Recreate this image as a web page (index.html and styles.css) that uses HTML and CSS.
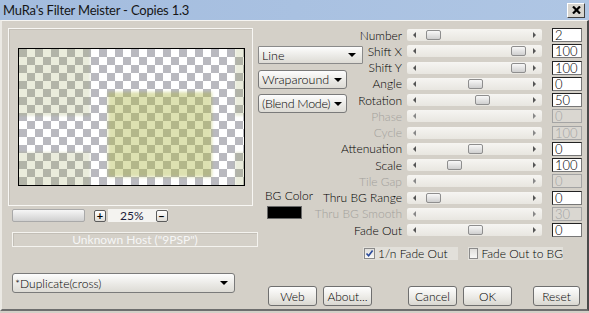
FILE: index.html
```html
<!DOCTYPE html>
<html lang="en">
<head>
  <meta charset="utf-8" />
  <title>MuRa's Filter Meister - Copies 1.3</title>
  <link rel="stylesheet" href="styles.css">
</head>
<body>
  <div class="window">
    <div class="titlebar">
      <span class="title">MuRa's Filter Meister - Copies 1.3</span>
      <button class="close">
        <svg width="9" height="8" viewBox="0 0 9 8"><path d="M1 0.5 L8 7.5 M8 0.5 L1 7.5" stroke="#000" stroke-width="2.2" /></svg>
      </button>
    </div>

    <div class="client">
      <div class="left">
        <div class="preview-frame">
          <div class="preview">
            <div class="tint tl"></div>
            <div class="tint bl"></div>
            <div class="tint tr"></div>
            <div class="tint br"></div>
            <div class="tint main"></div>
          </div>
        </div>
        <div class="zoom-row">
          <div class="zoom-bar"></div>
          <button class="mini">+</button>
          <div class="zoom-val">
            <span>25%</span>
            <button class="mini">&minus;</button>
          </div>
        </div>
        <div class="host">Unknown Host ("9PSP")</div>
        <div class="combo wide">*Duplicate(cross)<span class="arrow"></span></div>
      </div>

      <div class="right">
        <div class="stack">
          <div class="side">
            <div class="combo line">Line<span class="arrow"></span></div>
            <div class="combo drop wrap">Wraparound<span class="arrow"></span></div>
            <div class="combo drop blend">(Blend Mode)<span class="arrow"></span></div>
            <div class="bg-label">BG Color</div>
            <div class="swatch"></div>
          </div>

          <div class="params">
            <div class="row">
              <label>Number</label>
              <div class="track"><i class="la"></i><span class="thumb" style="left:19px"></span><i class="ra"></i></div>
              <div class="val">2</div>
            </div>
            <div class="row">
              <label>Shift X</label>
              <div class="track"><i class="la"></i><span class="thumb" style="left:104px"></span><i class="ra"></i></div>
              <div class="val">100</div>
            </div>
            <div class="row">
              <label>Shift Y</label>
              <div class="track"><i class="la"></i><span class="thumb" style="left:104px"></span><i class="ra"></i></div>
              <div class="val">100</div>
            </div>
            <div class="row">
              <label>Angle</label>
              <div class="track"><i class="la"></i><span class="thumb" style="left:61px"></span><i class="ra"></i></div>
              <div class="val">0</div>
            </div>
            <div class="row">
              <label>Rotation</label>
              <div class="track"><i class="la"></i><span class="thumb" style="left:68px"></span><i class="ra"></i></div>
              <div class="val">50</div>
            </div>
            <div class="row off">
              <label>Phase</label>
              <div class="track"><i class="la"></i><i class="ra"></i></div>
              <div class="val">0</div>
            </div>
            <div class="row off">
              <label>Cycle</label>
              <div class="track"><i class="la"></i><i class="ra"></i></div>
              <div class="val">100</div>
            </div>
            <div class="row">
              <label>Attenuation</label>
              <div class="track"><i class="la"></i><span class="thumb" style="left:61px"></span><i class="ra"></i></div>
              <div class="val">0</div>
            </div>
            <div class="row">
              <label>Scale</label>
              <div class="track"><i class="la"></i><span class="thumb" style="left:40px"></span><i class="ra"></i></div>
              <div class="val">100</div>
            </div>
            <div class="row off">
              <label>Tile Gap</label>
              <div class="track"><i class="la"></i><i class="ra"></i></div>
              <div class="val">0</div>
            </div>
            <div class="row">
              <label>Thru BG Range</label>
              <div class="track"><i class="la"></i><span class="thumb" style="left:19px"></span><i class="ra"></i></div>
              <div class="val">0</div>
            </div>
            <div class="row off">
              <label>Thru BG Smooth</label>
              <div class="track"><i class="la"></i><i class="ra"></i></div>
              <div class="val">30</div>
            </div>
            <div class="row">
              <label>Fade Out</label>
              <div class="track"><i class="la"></i><span class="thumb" style="left:61px"></span><i class="ra"></i></div>
              <div class="val">0</div>
            </div>
          </div>
        </div>

        <div class="checks">
          <div class="check">
            <span class="box on">
              <svg width="9" height="9" viewBox="0 0 9 9"><path d="M1.5 4.5 L3.6 6.8 L7.6 1.6" fill="none" stroke="#2a4a9a" stroke-width="1.6" /></svg>
            </span>
            1/n Fade Out
          </div>
          <div class="check">
            <span class="box"></span>
            Fade Out to BG
          </div>
        </div>

        <div class="buttons">
          <button class="btn">Web</button>
          <button class="btn about">About...</button>
          <button class="btn cancel">Cancel</button>
          <button class="btn ok">OK</button>
          <button class="btn reset">Reset</button>
        </div>
      </div>
    </div>
  </div>
</body>
</html>
```

FILE: styles.css
```css
body {
  margin: 0;
  font-family: Lato, "Liberation Sans", Arial, sans-serif;
  font-size: 12px;
  font-weight: 300;
  color: #000;
  background: #d4d0c8;
  white-space: nowrap;
}
button {
  font-family: inherit;
  font-weight: inherit;
  letter-spacing: inherit;
  color: inherit;
  padding: 0;
}
.window {
  width: 589px;
  height: 313px;
  background: #d4d0c8;
  overflow: hidden;
}

/* title bar */
.titlebar {
  height: 20px;
  display: flex;
  align-items: center;
  justify-content: space-between;
  padding: 0 4px 0 3px;
  background: linear-gradient(to right, #a3bcde, #afc6e4);
}
.title {
  font-size: 13px;
  font-weight: 400;
  letter-spacing: -0.2px;
  color: #161616;
}
.close {
  width: 18px;
  height: 15px;
  box-sizing: border-box;
  border: 1px solid;
  border-color: #fff #404040 #404040 #fff;
  background: #d8d5cf;
  display: flex;
  align-items: center;
  justify-content: center;
}

/* client area */
.client {
  display: grid;
  grid-template-columns: 256px 1fr;
  height: 291px;
  box-sizing: border-box;
  border-top: 1px solid #f6f5f2;
  border-left: 2px solid #ebe9e4;
  border-right: 2px solid #4a4a4a;
  border-bottom: 2px solid #6e6e6e;
}

/* preview */
.preview-frame {
  margin: 7px 0 0 6px;
  width: 245px;
  height: 178px;
  box-sizing: border-box;
  border: 1px solid #f8f7f4;
  box-shadow: inset 1px 1px #c4c0b8;
  padding: 19px 0 0 9px;
}
.preview {
  width: 227px;
  height: 138px;
  box-sizing: border-box;
  border: 1px solid #000;
  position: relative;
  overflow: hidden;
  background: repeating-conic-gradient(#fff 0 25%, #b9b9bf 0 50%) 0 0 / 16px 16px;
}
.tint {
  position: absolute;
  background: rgba(150, 160, 80, 0.2);
  filter: blur(1px);
}
.tint.tl { left: -4px; top: -4px; width: 75px; height: 71px; }
.tint.bl { left: -4px; top: 103px; width: 75px; height: 40px; }
.tint.tr { left: 216px; top: -4px; width: 20px; height: 71px; }
.tint.br { left: 216px; top: 103px; width: 20px; height: 40px; }
.tint.main {
  left: 89px;
  top: 43px;
  width: 104px;
  height: 85px;
  background: rgba(170, 180, 60, 0.4);
  filter: blur(1.5px);
}

/* zoom controls */
.zoom-row {
  display: flex;
  align-items: center;
  height: 13px;
  margin: 3px 0 0 10px;
}
.zoom-bar {
  width: 73px;
  height: 13px;
  box-sizing: border-box;
  border: 1px solid #a9a9a9;
  border-radius: 2px;
  background: linear-gradient(#f6f6f6, #d0d0d0);
}
.mini {
  width: 12px;
  height: 12px;
  margin-left: 9px;
  box-sizing: border-box;
  border: 1px solid #5c5c5c;
  border-radius: 2px;
  background: linear-gradient(#fff, #dedcd6);
  font-size: 11px;
  font-weight: bold;
  line-height: 9px;
  display: flex;
  align-items: center;
  justify-content: center;
}
.zoom-val {
  display: flex;
  align-items: center;
  width: 60px;
  height: 13px;
  margin-left: 2px;
  background: #f4f3f0;
}
.zoom-val span {
  margin-left: 12px;
  color: #1c1c3c;
  font-weight: 400;
}
.zoom-val .mini {
  margin-left: 12px;
}

.host {
  margin: 10px 0 0 10px;
  width: 246px;
  height: 15px;
  box-sizing: border-box;
  border: 1px solid #f4f3ef;
  box-shadow: inset 1px 1px #c2beb6;
  color: #f6f6f6;
  font-weight: 400;
  text-align: center;
  line-height: 13px;
}

/* drop downs */
.combo {
  display: flex;
  align-items: center;
  justify-content: space-between;
  box-sizing: border-box;
  border: 1px solid #7a7a7a;
  border-radius: 3px;
  background: linear-gradient(#fdfdfd, #e9e8e4 60%, #dddbd5);
  padding: 0 6px 0 3px;
  font-size: 12.5px;
}
.arrow {
  width: 0;
  height: 0;
  border-left: 4px solid transparent;
  border-right: 4px solid transparent;
  border-top: 4px solid #000;
}
.combo.wide {
  width: 223px;
  height: 20px;
  margin: 26px 0 0 10px;
  font-size: 12px;
  padding-left: 2px;
}
.combo.line {
  width: 105px;
  height: 18px;
  margin-top: 19px;
  border-radius: 1px;
  border-color: #8a8a8a;
}
.combo.drop {
  width: 89px;
  height: 19px;
  padding-right: 4px;
}
.combo.wrap { margin-top: 6px; }
.combo.blend { margin-top: 5px; letter-spacing: -0.3px; }

/* parameter sliders */
.stack {
  display: grid;
  margin-top: 6px;
}
.side,
.params {
  grid-area: 1 / 1;
}
.side {
  display: flex;
  flex-direction: column;
  align-items: flex-start;
}
.bg-label {
  margin: 76px 0 0 7px;
  line-height: 13px;
}
.swatch {
  width: 35px;
  height: 13px;
  margin: 4px 0 0 9px;
  box-sizing: border-box;
  background: #000;
  border: 1px solid #6a6a6a;
}
.row {
  display: grid;
  grid-template-columns: 149px 145px 30px;
  align-items: center;
  height: 16.25px;
}
.row label {
  text-align: right;
  padding-right: 5px;
}
.row.off label {
  color: #a3a19c;
}
.track {
  position: relative;
  width: 135px;
  height: 12px;
  display: flex;
  align-items: center;
  justify-content: space-between;
  padding: 0 6px;
  box-sizing: border-box;
  border-radius: 2px;
  background: linear-gradient(#f6f5f2, #e8e6e0);
}
.la,
.ra {
  width: 0;
  height: 0;
  border-top: 3px solid transparent;
  border-bottom: 3px solid transparent;
}
.la { border-right: 3px solid #555; }
.ra { border-left: 3px solid #555; }
.row.off .la { border-right-color: #888; }
.row.off .ra { border-left-color: #888; }
.thumb {
  position: absolute;
  top: 1px;
  width: 15px;
  height: 10px;
  box-sizing: border-box;
  border: 1px solid #8e8e8e;
  border-radius: 2px;
  background: linear-gradient(#f8f8f8, #cfcfcf);
}
.val {
  width: 30px;
  height: 14px;
  box-sizing: border-box;
  border: 1px solid #222;
  border-right-color: #777;
  border-bottom-color: #777;
  background: #fff;
  font-size: 13px;
  line-height: 12px;
  padding-left: 2px;
}
.row.off .val {
  background: #dad7d1;
  border-color: #a4a4a4;
  color: #a4a4a4;
}

/* check boxes */
.checks {
  display: flex;
  gap: 10px;
  margin: 9px 0 0 105px;
}
.check {
  display: flex;
  align-items: center;
  gap: 3px;
  width: 95px;
  height: 13px;
  background: #e2e0da;
  font-size: 12px;
}
.box {
  width: 11px;
  height: 11px;
  margin-left: 1px;
  box-sizing: border-box;
  border: 1px solid #8a8a8a;
  background: linear-gradient(#e0dfdc, #f8f8f6);
  display: flex;
  align-items: center;
  justify-content: center;
}

/* buttons */
.buttons {
  display: flex;
  margin: 26px 0 0 10px;
}
.btn {
  width: 49px;
  height: 20px;
  box-sizing: border-box;
  border: 1px solid #6f6f6f;
  border-radius: 3px;
  background: linear-gradient(#fefefe, #ecebe7 55%, #d9d7d1);
  font-size: 12px;
}
.btn.about { margin-left: 6px; }
.btn.cancel { margin-left: 36px; }
.btn.ok { margin-left: 6px; }
.btn.reset { margin-left: 21px; width: 47px; }
```
